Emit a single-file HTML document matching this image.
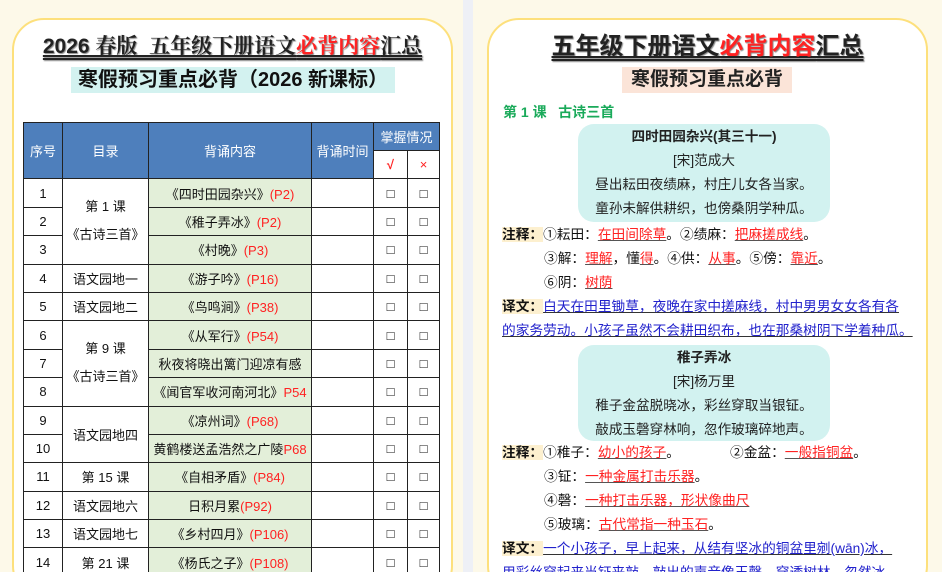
<!DOCTYPE html>
<html><head><meta charset="utf-8"><style>
*{margin:0;padding:0;box-sizing:border-box}
html,body{width:942px;height:572px;overflow:hidden}
body{background:#fdf9e9;font-family:"Liberation Sans","Noto Sans CJK SC",sans-serif;position:relative}
.strip{position:absolute;left:463px;top:0;width:10px;height:572px;background:#eef0f6}
.card{position:absolute;top:18px;height:580px;background:#fff;border:2px solid #fde07c;border-radius:32px}
.t1{position:absolute;left:0;width:100%;text-align:center;font-weight:bold;color:#222;text-decoration:underline double;text-shadow:1px 1px 1px #888}
.red{color:#f22}
table{position:absolute;left:9px;top:102px;border-collapse:collapse;font-size:13px;color:#111}
td{border:1.5px solid #222;text-align:center;height:28.4px;padding:0}
th{border:1.5px solid #222;background:#4e7fbc;color:#fff;font-weight:normal;font-size:13px}
.g{background:#e3efd9}
.p{color:#f22}
.r{position:absolute;font-size:13.7px;color:#111;white-space:nowrap}
.lab{background:#fdf0cf;font-weight:bold}
.u{color:#f22;text-decoration:underline;text-decoration-color:#555}
.b{color:#22c;text-decoration:underline;text-decoration-color:#333}
.box{position:absolute;left:89px;width:252px;background:#d2f2f0;border-radius:16px;text-align:center;font-size:13.6px;color:#222;line-height:24px}
</style></head><body>
<div class="strip"></div>
<div class="card" style="left:12px;width:441px">
 <div class="t1" style="top:10px;font-size:21px;font-family:'Liberation Sans','Noto Serif CJK SC',serif">2026 春版&nbsp; 五年级下册语文<span class="red">必背内容</span>汇总</div>
 <div style="position:absolute;top:47px;left:57px;width:324px;height:26px;background:#d3f2f0;font-size:20px;font-weight:bold;text-align:center;line-height:26px;color:#111">寒假预习重点必背（2026 新课标）</div>
 <table>
 <colgroup><col style="width:39px"><col style="width:86px"><col style="width:163px"><col style="width:62px"><col style="width:34px"><col style="width:32px"></colgroup>
 <tr><th rowspan="2" style="height:28px">序号</th><th rowspan="2">目录</th><th rowspan="2">背诵内容</th><th rowspan="2">背诵时间</th><th colspan="2" style="height:28px">掌握情况</th></tr>
 <tr><td style="color:#f22;font-weight:bold">√</td><td style="color:#f22">×</td></tr>
 <tr><td>1</td><td rowspan="3" style="line-height:28px">第 1 课<br>《古诗三首》</td><td class="g">《四时田园杂兴》<span class="p">(P2)</span></td><td></td><td>□</td><td>□</td></tr>
 <tr><td>2</td><td class="g">《稚子弄冰》<span class="p">(P2)</span></td><td></td><td>□</td><td>□</td></tr>
 <tr><td>3</td><td class="g">《村晚》<span class="p">(P3)</span></td><td></td><td>□</td><td>□</td></tr>
 <tr><td>4</td><td>语文园地一</td><td class="g">《游子吟》<span class="p">(P16)</span></td><td></td><td>□</td><td>□</td></tr>
 <tr><td>5</td><td>语文园地二</td><td class="g">《鸟鸣涧》<span class="p">(P38)</span></td><td></td><td>□</td><td>□</td></tr>
 <tr><td>6</td><td rowspan="3" style="line-height:28px">第 9 课<br>《古诗三首》</td><td class="g">《从军行》<span class="p">(P54)</span></td><td></td><td>□</td><td>□</td></tr>
 <tr><td>7</td><td class="g">秋夜将晓出篱门迎凉有感</td><td></td><td>□</td><td>□</td></tr>
 <tr><td>8</td><td class="g">《闻官军收河南河北》<span class="p">P54</span></td><td></td><td>□</td><td>□</td></tr>
 <tr><td>9</td><td rowspan="2">语文园地四</td><td class="g">《凉州词》<span class="p">(P68)</span></td><td></td><td>□</td><td>□</td></tr>
 <tr><td>10</td><td class="g">黄鹤楼送孟浩然之广陵<span class="p">P68</span></td><td></td><td>□</td><td>□</td></tr>
 <tr><td>11</td><td>第 15 课</td><td class="g">《自相矛盾》<span class="p">(P84)</span></td><td></td><td>□</td><td>□</td></tr>
 <tr><td>12</td><td>语文园地六</td><td class="g">日积月累<span class="p">(P92)</span></td><td></td><td>□</td><td>□</td></tr>
 <tr><td>13</td><td>语文园地七</td><td class="g">《乡村四月》<span class="p">(P106)</span></td><td></td><td>□</td><td>□</td></tr>
 <tr><td>14</td><td>第 21 课</td><td class="g">《杨氏之子》<span class="p">(P108)</span></td><td></td><td>□</td><td>□</td></tr>
 </table>
</div>
<div class="card" style="left:487px;width:441px">
 <div class="t1" style="top:6px;font-size:24px">五年级下册语文<span class="red">必背内容</span>汇总</div>
 <div style="position:absolute;top:47px;left:133px;width:170px;height:26px;background:#fbe4d8;font-size:19px;font-weight:bold;text-align:center;line-height:26px;color:#222">寒假预习重点必背</div>
 <div class="r" style="left:14px;top:82px;color:#1aaa5a;font-weight:bold;font-size:14px">第 1 课 &nbsp; 古诗三首</div>
 <div class="box" style="top:104px;height:98px;padding-top:1px"><b>四时田园杂兴(其三十一)</b><br>[宋]范成大<br>昼出耘田夜绩麻，村庄儿女各当家。<br>童孙未解供耕织，也傍桑阴学种瓜。</div>
 <div class="r" style="left:13px;top:203px;line-height:24px"><span class="lab">注释：</span>①耘田：<span class="u">在田间除草</span>。②绩麻：<span class="u">把麻搓成线</span>。</div>
 <div class="r" style="left:55px;top:227px;line-height:24px">③解：<span class="u">理解</span>，懂<span class="u">得</span>。④供：<span class="u">从事</span>。⑤傍：<span class="u">靠近</span>。</div>
 <div class="r" style="left:55px;top:251px;line-height:24px">⑥阴：<span class="u">树荫</span></div>
 <div class="r" style="left:13px;top:275px;line-height:24px"><span class="lab">译文：</span><span class="b">白天在田里锄草，夜晚在家中搓麻线，村中男男女女各有各</span></div>
 <div class="r" style="left:13px;top:299px;line-height:24px"><span class="b">的家务劳动。小孩子虽然不会耕田织布，也在那桑树阴下学着种瓜。</span></div>
 <div class="box" style="top:325px;height:96px;padding-top:1px"><b>稚子弄冰</b><br>[宋]杨万里<br>稚子金盆脱晓冰，彩丝穿取当银钲。<br>敲成玉磬穿林响，忽作玻璃碎地声。</div>
 <div class="r" style="left:13px;top:421px;line-height:24px"><span class="lab">注释：</span>①稚子：<span class="u">幼小的孩子</span>。<span style="display:inline-block;width:50px"></span>②金盆：<span class="u">一般指铜盆</span>。</div>
 <div class="r" style="left:55px;top:445px;line-height:24px">③钲：<span class="u">一种金属打击乐器</span>。</div>
 <div class="r" style="left:55px;top:469px;line-height:24px">④磬：<span class="u">一种打击乐器，形状像曲尺</span></div>
 <div class="r" style="left:55px;top:493px;line-height:24px">⑤玻璃：<span class="u">古代常指一种玉石</span>。</div>
 <div class="r" style="left:13px;top:517px;line-height:24px"><span class="lab">译文：</span><span class="b">一个小孩子，早上起来，从结有坚冰的铜盆里剜(wān)冰，</span></div>
 <div class="r" style="left:13px;top:541px;line-height:24px"><span class="b">用彩丝穿起来当钲来敲，敲出的声音像玉磬，穿透树林，忽然冰</span></div>
</div>
</body></html>
